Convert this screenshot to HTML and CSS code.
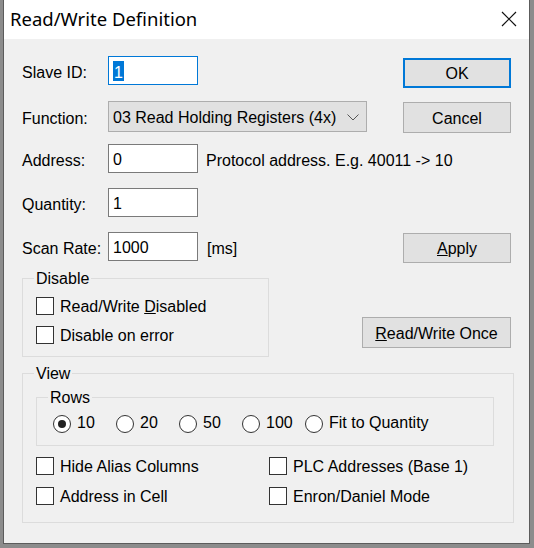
FILE: index.html
```html
<!DOCTYPE html>
<html>
<head>
<meta charset="utf-8">
<link rel="stylesheet" href="styles.css">
</head>
<body>
<div class="window">
  <div class="titlebar">
    <span class="title">Read/Write Definition</span>
    <svg class="close" width="16" height="16" viewBox="0 0 16 16"><path d="M1 1L15 15M15 1L1 15" stroke="#111" stroke-width="1.2" fill="none"/></svg>
  </div>
  <div class="content">
    <div class="row r1">
      <div class="left">
        <span class="label">Slave ID:</span>
        <div class="field focus"><span class="sel">1</span></div>
      </div>
      <div class="btn default b1">OK</div>
    </div>
    <div class="row r2">
      <div class="left">
        <span class="label">Function:</span>
        <div class="select">
          <span class="seltext">03 Read Holding Registers (4x)</span>
          <svg class="chev" width="12" height="7" viewBox="0 0 12 7"><path d="M0.5 0.5L6 6L11.5 0.5" stroke="#555" stroke-width="1" fill="none"/></svg>
        </div>
      </div>
      <div class="btn b2">Cancel</div>
    </div>
    <div class="row r3">
      <div class="left">
        <span class="label">Address:</span>
        <div class="field">0</div>
        <span class="hint">Protocol address. E.g. 40011 -&gt; 10</span>
      </div>
    </div>
    <div class="row r4">
      <div class="left">
        <span class="label">Quantity:</span>
        <div class="field">1</div>
      </div>
    </div>
    <div class="row r5">
      <div class="left">
        <span class="label">Scan Rate:</span>
        <div class="field">1000</div>
        <span class="hint ms">[ms]</span>
      </div>
      <div class="btn b5"><u>A</u>pply</div>
    </div>
    <div class="row r6">
      <div class="group disable">
        <span class="gtitle">Disable</span>
        <div class="check c1"><span class="box"></span><span>Read/Write <u>D</u>isabled</span></div>
        <div class="check c2"><span class="box"></span><span>Disable on error</span></div>
      </div>
      <div class="btn once"><u>R</u>ead/Write Once</div>
    </div>
    <div class="group view">
      <span class="gtitle">View</span>
      <div class="group rows">
        <span class="gtitle">Rows</span>
        <div class="radios">
          <div class="radio w63"><span class="circle on"></span><span>10</span></div>
          <div class="radio w63"><span class="circle"></span><span>20</span></div>
          <div class="radio w63"><span class="circle"></span><span>50</span></div>
          <div class="radio w63"><span class="circle"></span><span>100</span></div>
          <div class="radio"><span class="circle"></span><span>Fit to Quantity</span></div>
        </div>
      </div>
      <div class="checkgrid">
        <div class="check"><span class="box"></span><span>Hide Alias Columns</span></div>
        <div class="check"><span class="box"></span><span>PLC Addresses (Base 1)</span></div>
        <div class="check"><span class="box"></span><span>Address in Cell</span></div>
        <div class="check"><span class="box"></span><span>Enron/Daniel Mode</span></div>
      </div>
    </div>
  </div>
</div>
</body>
</html>
```
FILE: styles.css
```css
* { box-sizing: border-box; }
html, body { margin: 0; padding: 0; }
body {
  width: 534px;
  height: 548px;
  background: #8c8c8c;
  overflow: hidden;
  padding-left: 3px;
  font-family: "Liberation Sans", Arial, sans-serif;
  font-size: 16px;
  color: #000;
}
.window {
  width: 527px;
  height: 544px;
  background: #f0f0f0;
  border: 1px solid #5c5c5c;
  border-top: none;
}
.titlebar {
  height: 39px;
  background: #fff;
  display: flex;
  align-items: center;
  justify-content: space-between;
  padding: 0 12px 0 6px;
}
.title {
  font-family: "Noto Sans", sans-serif;
  font-size: 18.5px;
  color: #000;
  margin-top: -2px;
}
.close { margin-top: -1px; }
.content {
  padding: 17px 18px 0 18px;
}
.row {
  display: flex;
  justify-content: space-between;
  align-items: flex-start;
}
.left {
  display: flex;
  align-items: center;
}
.label {
  width: 86px;
  line-height: 25px;
  padding-top: 4px;
}
.hint {
  line-height: 25px;
  padding-top: 4px;
  margin-left: 8px;
}
.hint.ms { margin-left: 9px; }
.field {
  width: 90px;
  height: 29px;
  background: #fff;
  border: 1px solid #7a7a7a;
  padding: 2px 4px 0;
  line-height: 25px;
}
.field.focus { border-color: #0078d7; padding-top: 0; line-height: 27px; }
.sel {
  background: #0078d7;
  color: #fff;
  display: inline-block;
  line-height: 19px;
  padding: 2px 1px 0 1px;
  height: 20px;
  margin-top: 4px;
  vertical-align: top;
}
.select {
  width: 259px;
  height: 31px;
  background: #e1e1e1;
  border: 1px solid #adadad;
  display: flex;
  align-items: center;
  justify-content: space-between;
  padding: 0 6px 0 4px;
}
.seltext { padding-top: 3px; }
.chev { margin-top: 1px; margin-right: 1px; }
.btn {
  width: 108px;
  height: 30px;
  background: #e1e1e1;
  border: 1px solid #adadad;
  display: flex;
  align-items: center;
  justify-content: center;
  padding-top: 2px;
}
.btn.default { border: 2px solid #0078d7; }
.r1 { height: 29px; }
.b1 { margin-top: 2px; }
.r2 { margin-top: 16px; height: 32px; }
.b2 { margin-top: 1px; height: 31px; }
.r3 { margin-top: 11px; height: 29px; }
.r4 { margin-top: 15px; height: 29px; }
.r5 { margin-top: 15px; height: 31px; }
.b5 { margin-top: 1px; }
.r6 { margin-top: 15px; align-items: flex-start; }
.group {
  position: relative;
  border: 1px solid #dcdcdc;
}
.gtitle {
  position: absolute;
  top: -9px;
  left: 11px;
  background: #f0f0f0;
  padding: 0 2px;
  line-height: 18px;
}
.disable {
  width: 247px;
  height: 79px;
  padding: 18px 0 0 13px;
}
.once {
  width: 149px;
  height: 31px;
  margin-top: 39px;
}
.check {
  display: flex;
  align-items: center;
  height: 18px;
}
.check > span:last-child { padding-top: 1px; }
.box {
  width: 18px;
  height: 18px;
  background: #fff;
  border: 1px solid #333;
  margin-right: 6px;
  flex: none;
}
.c2 { margin-top: 11px; }
.view {
  width: 492px;
  height: 150px;
  margin-top: 16px;
  padding: 23px 0 0 13px;
}
.rows {
  width: 458px;
  height: 49px;
  padding: 17px 0 0 16px;
}
.radios { display: flex; }
.radio {
  display: flex;
  align-items: center;
  height: 18px;
}
.radio > span:last-child { padding-bottom: 2px; }
.w63 { width: 63px; }
.circle {
  width: 18px;
  height: 18px;
  border-radius: 50%;
  background: #fff;
  border: 1px solid #333;
  margin-right: 6px;
  position: relative;
  flex: none;
}
.circle.on::after {
  content: "";
  position: absolute;
  left: 4px;
  top: 4px;
  width: 8px;
  height: 8px;
  border-radius: 50%;
  background: #222;
}
.checkgrid {
  display: grid;
  grid-template-columns: 233px auto;
  row-gap: 12px;
  margin-top: 11px;
}
```
